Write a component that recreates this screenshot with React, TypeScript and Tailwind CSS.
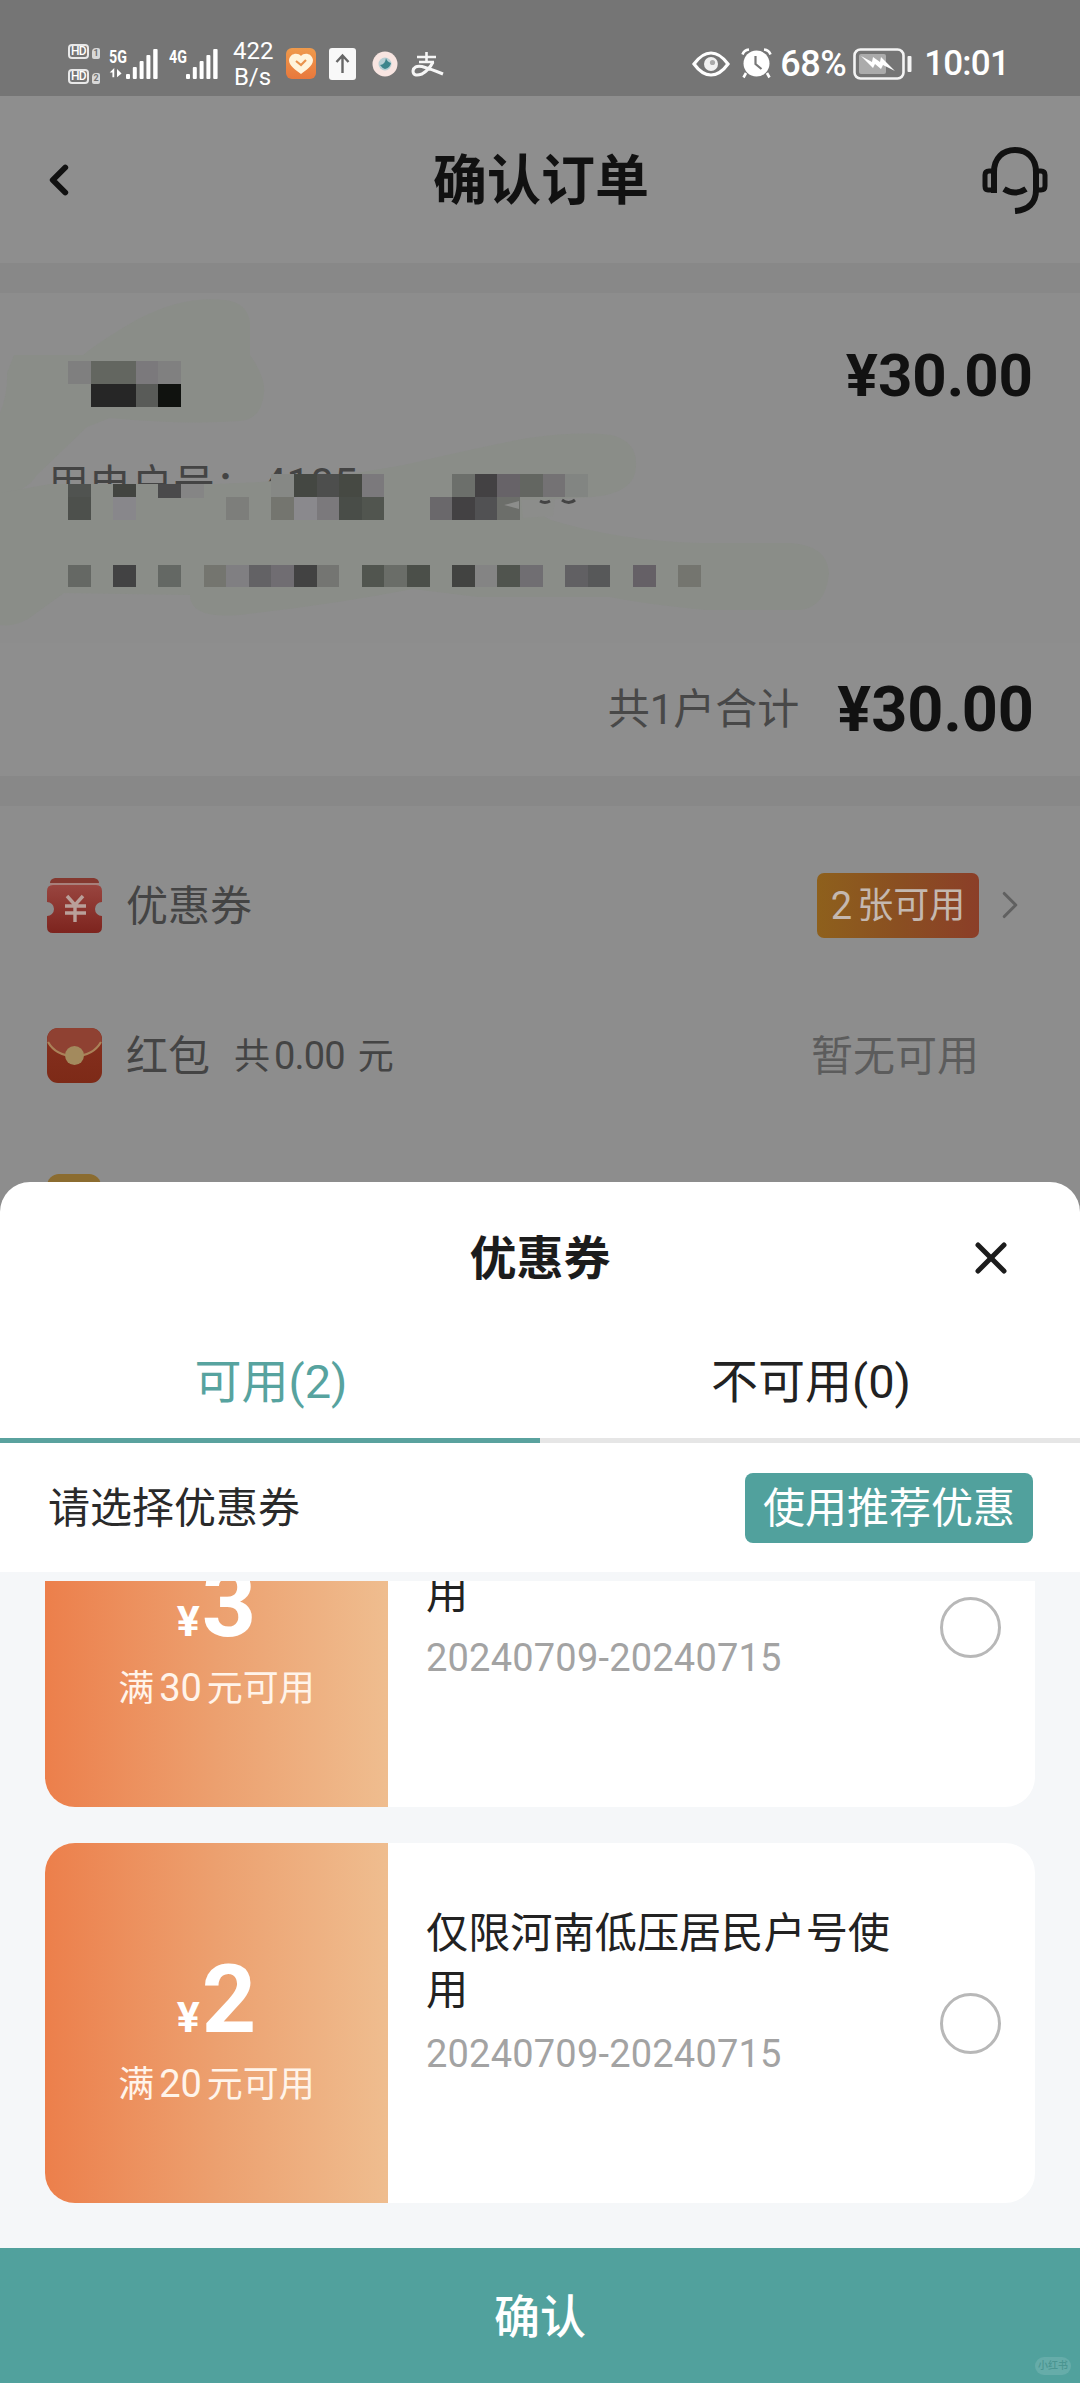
import { ChevronLeft, ChevronRight, X } from "lucide-react";

interface Coupon {
  amount: number;
  threshold: number;
  title: string;
  period: string;
}

const COUPONS: Coupon[] = [
  {
    amount: 3,
    threshold: 30,
    title: "仅限河南低压居民户号使用",
    period: "20240709-20240715",
  },
  {
    amount: 2,
    threshold: 20,
    title: "仅限河南低压居民户号使用",
    period: "20240709-20240715",
  },
];

const CELL = 22.6;
const MOSAIC_LEFT = 68;

interface MosaicRow {
  y: number;
  height: number;
  cells: [column: number, fill: string][];
}

// Blocks that hide the customer's name, account and address.
const MOSAIC_ROWS: MosaicRow[] = [
  {
    y: 68,
    height: 23,
    cells: [[0, "#7f7f7f"], [1, "#636660"], [2, "#636660"], [3, "#7b797c"], [4, "#808080"]],
  },
  {
    y: 91,
    height: 22.5,
    cells: [[1, "#262626"], [2, "#262626"], [3, "#595b58"], [4, "#10120f"]],
  },
  {
    y: 190.5,
    height: 14,
    cells: [[0, "#505350"], [2, "#424440"], [4, "#4a4a4b"], [5, "#858585"]],
  },
  {
    y: 181,
    height: 23,
    cells: [
      [9, "#868885"], [10, "#444742"], [11, "#4d4e4d"], [12, "#464943"], [13, "#7b797c"],
      [17, "#6c6f6b"], [18, "#434143"], [19, "#676368"], [20, "#636661"], [21, "#747274"],
      [22, "#828582"],
    ],
  },
  {
    y: 204,
    height: 22.5,
    cells: [
      [0, "#4d504c"], [2, "#88878b"], [7, "#7d7e7b"], [9, "#74756f"], [10, "#8a898d"],
      [11, "#7b797c"], [12, "#494d48"], [13, "#51554f"], [16, "#6a686b"], [17, "#434143"],
      [18, "#515153"], [19, "#6c6e6a"],
    ],
  },
  {
    y: 271.5,
    height: 22.5,
    cells: [
      [0, "#656864"], [2, "#424243"], [4, "#646864"], [6, "#74756f"], [7, "#807f82"],
      [8, "#636265"], [9, "#706d72"], [10, "#424242"], [11, "#747572"], [13, "#51554f"],
      [14, "#6a6d68"], [15, "#4b4f49"], [17, "#424341"], [18, "#848484"], [19, "#50544e"],
      [20, "#706e72"], [22, "#616063"], [23, "#575859"], [25, "#656066"], [27, "#74756f"],
    ],
  },
];

const PrivacyMosaic = (): JSX.Element => (
  <svg className="absolute left-0 top-0" width="840" height="350" viewBox="0 0 840 350">
    <g fill="#8a8d88">
      <path d="M14 62H83Q100 48 138 26Q184 2 225 7Q248 10 250 30V62Q266 85 264 100Q262 126 240 128Q184 132 110 125L87 134L37 182Q25 200 0 202V120Q8 100 7 80Z" />
      <path d="M0 200L50 191H215L260 189L345 182L404 172Q480 154 528 145Q580 138 611 142Q636 148 636 170Q638 200 592 204Q560 206 530 208L524 212L551 227Q620 248 700 250H790Q827 252 829 280Q826 314 800 317H707Q650 312 610 304H478L413 296Q330 312 239 322Q190 326 190 302L64 300L28 326Q14 334 0 332Z" />
    </g>
    {MOSAIC_ROWS.map((row) =>
      row.cells.map(([column, fill]) => (
        <rect
          key={`${row.y}-${column}`}
          x={MOSAIC_LEFT + column * CELL}
          y={row.y}
          width={CELL}
          height={row.height}
          fill={fill}
          shapeRendering="crispEdges"
        />
      )),
    )}
    <path d="M504 212l15-4v8zM521 207h34l-2 16-30 2z" fill="#8c8d8b" />
    <path d="M540 208q5 3 10 0M562 207q7 5 13 0" fill="none" stroke="#444" strokeWidth="3" />
  </svg>
);

const SignalBars = (): JSX.Element => (
  <g fill="#fff">
    <rect x="0" y="25" width="4" height="5" rx="1" />
    <rect x="6.8" y="18" width="4" height="12" rx="1" />
    <rect x="13.6" y="12" width="4" height="18" rx="1" />
    <rect x="20.4" y="6" width="4" height="24" rx="1" />
    <rect x="27.2" y="0" width="4.4" height="30" rx="1" />
  </g>
);

const HdBadge = ({ sim }: { sim: string }): JSX.Element => (
  <div className="flex items-end gap-[3px]">
    <span className="flex h-[15px] w-[21px] items-center justify-center rounded-[4px] border-2 border-[#e8e8e8] text-[12px] font-medium leading-none tracking-tighter">
      HD
    </span>
    <span className="flex h-[11px] w-[8px] items-center justify-center rounded-[2px] rounded-tl-[4px] bg-[#d8d8d8] text-[9px] font-bold leading-none text-[#747474]">
      {sim}
    </span>
  </div>
);

const StatusBar = (): JSX.Element => (
  <div className="flex h-24 items-center bg-[#757575] pl-[68px] pr-[71px] pt-[31px] text-white">
    <div className="flex flex-col gap-[10px]">
      <HdBadge sim="1" />
      <HdBadge sim="2" />
    </div>
    <div className="ml-[9px] flex h-[30px]">
      <div className="flex w-[17px] flex-col">
        <span className="origin-left scale-x-75 text-[19px] font-bold leading-[15px]">5G</span>
        <svg className="mt-[4px]" width="16" height="12" viewBox="0 0 16 12" fill="#fff">
          <path d="M0 5L5 0v10H3V5zM8 1l5 5-5 4z" />
        </svg>
      </div>
      <svg width="33" height="30" viewBox="0 0 33 30">
        <SignalBars />
      </svg>
    </div>
    <div className="ml-[10px] flex h-[30px]">
      <span className="w-[17px] origin-left scale-x-75 text-[19px] font-bold leading-[15px]">4G</span>
      <svg width="33" height="30" viewBox="0 0 33 30">
        <SignalBars />
      </svg>
    </div>
    <div className="ml-[14px] w-[39px] text-center text-[24px] leading-[26px]">
      <div>422</div>
      <div>B/s</div>
    </div>
    <svg className="ml-[14px]" width="30" height="31" viewBox="0 0 30 31">
      <defs>
        <linearGradient id="heart-bg" x1="0" y1="0" x2="0" y2="1">
          <stop stopColor="#ef9a4c" />
          <stop offset="1" stopColor="#e8783c" />
        </linearGradient>
      </defs>
      <rect width="30" height="31" rx="6" fill="url(#heart-bg)" />
      <path d="M15 8C12 4 4 5 3 12c0 6 7 10 12 14 5-4 12-8 12-14C26 5 18 4 15 8Z" fill="#fff4dc" />
      <path d="M10 13l5 4 5-5" fill="none" stroke="#e9934d" strokeWidth="2.2" />
    </svg>
    <svg className="ml-[13px]" width="27" height="32" viewBox="0 0 27 32">
      <rect width="27" height="32" rx="3" fill="#f8f8f8" />
      <path d="M13.5 25V8M7.5 14l6-6.5 6 6.5" fill="none" stroke="#666" strokeWidth="2.4" />
    </svg>
    <svg className="ml-[16px]" width="26" height="26" viewBox="0 0 26 26">
      <circle cx="13" cy="13" r="12.5" fill="#f8e5e1" />
      <circle cx="13" cy="13" r="6.5" fill="#b7cfd4" />
      <path d="M8 14q5 0 6-7 1 4 5 5-1 5-6 6-3-1-5-4Z" fill="#3d858c" />
    </svg>
    <svg className="ml-[13px]" width="33" height="26" viewBox="0 0 33 26" fill="none" stroke="#f6f6f6">
      <path d="M6 6h19M15.500 1v10M8 11h15" strokeWidth="2.600" />
      <path d="M22 11Q18 19 11 23 2 26 2 20 3 14 11 15.500 20 18 32 23" strokeWidth="3" />
    </svg>
    <svg className="ml-auto" width="38" height="26" viewBox="0 0 38 26">
      <path d="M2 13Q10 2 19 2t17 11Q28 24 19 24T2 13Z" fill="none" stroke="#fff" strokeWidth="3.200" />
      <circle cx="19" cy="13" r="7" fill="#f1f1f1" />
      <circle cx="20.500" cy="11.500" r="2.600" fill="#aaa" />
    </svg>
    <svg className="ml-[11px]" width="31" height="31" viewBox="0 0 31 31">
      <circle cx="15.500" cy="15.500" r="13" fill="#fff" />
      <path d="M1.500 6.500Q3 2 8 1.500M23 1.500q5 .5 6.500 5M5 25l-2.500 4.500M26 25l2.500 4.500" fill="none" stroke="#fff" strokeWidth="2.600" />
      <path d="M14.500 8v8l6 5" fill="none" stroke="#777" strokeWidth="2.200" />
    </svg>
    <span className="ml-[8px] text-[36px] font-medium leading-none tracking-[-0.5px]">68%</span>
    <svg className="ml-[7px]" width="60" height="32" viewBox="0 0 60 32">
      <rect x="1.500" y="1.500" width="49" height="29" rx="6" fill="none" stroke="#f4f4f4" strokeWidth="2.600" />
      <rect x="6" y="6" width="27" height="20" rx="2" fill="#ababab" />
      <path d="M8 8l11 6 1-5 7 5 1-5 14 14-12-6-2 4-6-5-2 4z" fill="#fff" />
      <rect x="54.500" y="8" width="4" height="16" rx="1" fill="#f4f4f4" />
    </svg>
    <span className="ml-[11px] text-[35px] font-medium leading-none tracking-[-0.8px]">10:01</span>
  </div>
);

const HeadsetIcon = (): JSX.Element => (
  <svg width="68" height="68" viewBox="0 0 68 68" fill="none" stroke="#111" strokeWidth="6">
    <path d="M13 47V26C13 12 22 4 34 4s21 8 21 22v18c0 13-8 20-21 21" />
    <path d="M14 44H7q-3 0-3-4V29q0-4 4-4h6M55 25h5q4 0 4 4v11q0 4-4 4h-5" strokeWidth="5" />
    <path d="M23 43q11 7 22 0" />
  </svg>
);

const CouponIcon = (): JSX.Element => (
  <svg width="55" height="55" viewBox="0 0 55 55">
    <defs>
      <linearGradient id="coupon-red" x1="0" y1="0" x2="0" y2="1">
        <stop stopColor="#99453f" />
        <stop offset="1" stopColor="#7d241e" />
      </linearGradient>
    </defs>
    <path d="M8 0h39q5 1 5 5H3q0-4 5-5Z" fill="#84382f" />
    <path d="M3 5h49v3H3z" fill="#a8807b" />
    <path d="M6 7h43q6 0 6 6v11a7 7 0 0 0 0 14v11q0 6-6 6H6q-6 0-6-6V38a7 7 0 0 0 0-14V13q0-6 6-6Z" fill="url(#coupon-red)" />
    <path d="M20 18l8 9 8-9M18 28h21M18 35h21M28 27v17" fill="none" stroke="#b9a09a" strokeWidth="3.400" />
  </svg>
);

const RedPacketIcon = (): JSX.Element => (
  <svg width="55" height="55" viewBox="0 0 55 55">
    <defs>
      <linearGradient id="packet-red" x1="0" y1="0" x2="0" y2="1">
        <stop stopColor="#863020" />
        <stop offset="1" stopColor="#7d2a17" />
      </linearGradient>
    </defs>
    <rect width="55" height="55" rx="11" fill="url(#packet-red)" />
    <path d="M0 14Q0 0 12 0h31q12 0 12 14-8 14-27 14T0 14Z" fill="#8f4132" />
    <path d="M1 14q8 14 26.500 14T54 14" fill="none" stroke="#aa8259" strokeWidth="2.200" />
    <circle cx="27.500" cy="27.500" r="9.500" fill="#a38a5d" />
  </svg>
);

const OrderPage = (): JSX.Element => (
  <div className="h-[1240px] bg-[#8d8d8d]">
    <StatusBar />
    <header className="flex h-[167px] items-center justify-between bg-[#8e8e8e] pl-[34px] pr-[31px]">
      <ChevronLeft className="h-[50px] w-[50px] text-[#111]" strokeWidth={2.8} />
      <h1 className="ml-[17px] pt-[5px] text-[54px] font-bold leading-none text-[#111]">确认订单</h1>
      <HeadsetIcon />
    </header>
    <div className="h-[30px] bg-[#888]" />

    <section className="relative flex h-[350px] flex-col px-[47px] pt-[48px]">
      <div className="self-end text-[60px] font-bold leading-[70px] text-[#111]">¥30.00</div>
      <div className="mt-[45px] flex text-[42px] leading-[60px] text-[#444]">
        用电户号：<span className="ml-[6px] leading-[56px]">4105</span>
      </div>
      <PrivacyMosaic />
    </section>
    <div className="flex h-[133px] items-center justify-end bg-[#8e8e8e] pr-[46px]">
      <span className="text-[42px] text-[#484848]">共1户合计</span>
      <span className="ml-[38px] text-[63px] font-bold leading-none text-[#111]">¥30.00</span>
    </div>
    <div className="h-[30px] bg-[#888]" />

    <section className="px-[47px] pt-[24px]">
      <div className="flex h-[150px] items-center">
        <CouponIcon />
        <span className="ml-[24px] pt-[2px] text-[42px] text-[#444]">优惠券</span>
        <span className="ml-auto flex h-[65px] w-[162px] items-center justify-center rounded-[7px] bg-linear-to-r from-[#8e601c] via-[#8a4f21] to-[#8b3e28] pt-[2px] text-[36px] text-[#c4b8b0]">
          <span className="mr-[5px] text-[38px]">2</span>张可用
        </span>
        <ChevronRight className="ml-[8px] h-[50px] w-[46px] text-[#606060]" strokeWidth={1.6} />
      </div>
      <div className="flex h-[150px] items-center pr-[54px]">
        <RedPacketIcon />
        <span className="ml-[24px] pt-[2px] text-[42px] text-[#444]">红包</span>
        <span className="ml-[24px] pt-[2px] text-[36px] text-[#444]">
          共<span className="mx-[4px] text-[38px] tracking-[-0.8px]">0.00</span> 元
        </span>
        <span className="ml-auto pt-[2px] text-[42px] text-[#5c5c5c]">暂无可用</span>
      </div>
      <div className="mt-[44px] h-[54px] w-[54px] rounded-[12px] bg-[#8b6c30]" />
    </section>
  </div>
);

const CouponCard = ({ coupon }: { coupon: Coupon }): JSX.Element => (
  <article className="flex h-[360px] overflow-hidden rounded-[30px] bg-white">
    <div className="flex w-[343px] flex-col items-center bg-linear-to-r from-[#ec7f4b] via-[#eca06f] to-[#efbd8f] pt-[102px] text-white">
      <div className="flex items-baseline font-bold leading-[110px]">
        <span className="text-[43px]">¥</span>
        <span className="ml-[2px] text-[95px]">{coupon.amount}</span>
      </div>
      <div className="-mt-[13px] text-[36px] leading-[50px] text-[#fff4ea]">
        满<span className="mx-[5px] text-[38px]">{coupon.threshold}</span>元可用
      </div>
    </div>
    <div className="flex flex-1 items-center justify-between pl-[38px] pr-[34px]">
      <div className="w-[466px] pb-[62px]">
        <h3 className="text-[42.2px] leading-[57px] text-[#222]">{coupon.title}</h3>
        <p className="mt-[10px] text-[38px] leading-[50px] tracking-[0.2px] text-[#a3a3a3]">{coupon.period}</p>
      </div>
      <span className="h-[61px] w-[61px] rounded-full border-[3px] border-[#b8b8b8]" />
    </div>
  </article>
);

const CouponSheet = (): JSX.Element => (
  <div className="absolute inset-x-0 bottom-0 flex h-[1201px] flex-col overflow-hidden rounded-t-[30px] bg-white">
    <div className="flex h-[150px] items-center justify-between pl-[65px] pr-[63px] pt-[2px]">
      <span className="w-[50px]" />
      <h2 className="text-[47px] font-bold leading-none text-[#1c1c1c]">优惠券</h2>
      <X className="h-[52px] w-[52px] text-[#1c1c1c]" strokeWidth={2.3} />
    </div>
    <div className="flex h-[111px] text-[47px] leading-none">
      <div className="flex flex-1 items-center justify-center border-b-[5px] border-[#5aa29e] pb-[8px] pl-[2px] text-[#57a39f]">
        可用(2)
      </div>
      <div className="flex flex-1 items-center justify-center border-b-[5px] border-[#e6e6e6] pb-[8px] pl-[2px] text-[#222]">
        不可用(0)
      </div>
    </div>
    <div className="flex h-[129px] items-center justify-between pl-[48px] pr-[47px]">
      <span className="pt-[2px] text-[42px] text-[#2a2a2a]">请选择优惠券</span>
      <span className="flex h-[70px] w-[288px] items-center justify-center rounded-[8px] bg-[#51a19d] pt-[2px] text-[42px] text-white">
        使用推荐优惠
      </span>
    </div>
    <div className="flex-1 overflow-hidden bg-[#f5f7f9] px-[45px] pt-[9px]">
      <div className="h-[667px] overflow-hidden">
        <div className="-mt-[134px] flex flex-col gap-9">
          {COUPONS.map((coupon) => (
            <CouponCard key={coupon.amount} coupon={coupon} />
          ))}
        </div>
      </div>
    </div>
    <div className="relative flex h-[135px] items-center justify-center bg-[#51a19d] pt-[3px] text-[46px] font-medium text-white">
      确认
      <span className="absolute bottom-[8px] right-[9px] flex h-[18px] w-[36px] items-center justify-center rounded-full bg-[#66aca9] text-[10px] leading-none text-[#4b9591]">
        小红书
      </span>
    </div>
  </div>
);

export default function App(): JSX.Element {
  return (
    <div className="relative h-[2383px] w-[1080px] overflow-hidden font-[Roboto,'Noto_Sans_CJK_SC',sans-serif]">
      <OrderPage />
      <CouponSheet />
    </div>
  );
}
